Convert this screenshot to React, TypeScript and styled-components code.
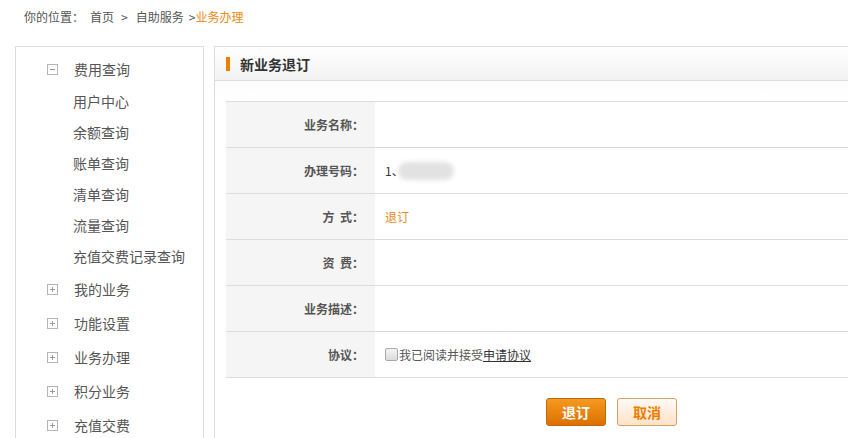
import * as React from 'react';
import styled, { createGlobalStyle } from 'styled-components';

const GlobalStyle = createGlobalStyle`
  html, body {
    margin: 0;
    padding: 0;
    background: #fff;
    overflow: hidden;
  }
  body {
    font-family: "Noto Sans CJK SC", "Liberation Sans", sans-serif;
    color: #555;
    font-size: 12px;
  }
`;

const Page = styled.div`
  width: 1100px;
  height: 438px;
  overflow: hidden;
`;

const Crumbs = styled.div`
  height: 34px;
  line-height: 34px;
  padding-left: 24px;
  font-size: 12px;
  color: #555;
  display: flex;
`;

const Here = styled.span`
  margin-right: 6px;
`;

const Sep = styled.span`
  margin: 0 ${p => (p.$tight ? '0' : '8px')} 0 ${p => (p.$tight ? '5px' : '7px')};
`;

const Current = styled.span`
  color: #f08a10;
`;

const Body = styled.div`
  display: flex;
  align-items: flex-start;
  gap: 10px;
  padding: 12px 0 0 15px;
`;

const Sidebar = styled.div`
  width: 187px;
  height: 420px;
  border: 1px solid #dcdcdc;
  padding-top: 5px;
  box-sizing: content-box;
`;

const MenuHead = styled.div`
  display: flex;
  align-items: center;
  height: 34px;
  padding-left: 31px;
  font-size: 14px;
  color: #555;
`;

const MenuSub = styled.div`
  height: 31px;
  line-height: 31px;
  padding-left: 57px;
  font-size: 14px;
  color: #555;
`;

const Toggle = styled.span`
  position: relative;
  width: 9px;
  height: 9px;
  border: 1px solid #b5b5b5;
  margin-right: 16px;
  flex: none;

  &::before {
    content: '';
    position: absolute;
    left: 2px;
    right: 2px;
    top: 4px;
    height: 1px;
    background: #999;
  }

  &::after {
    content: '';
    display: ${p => (p.$open ? 'none' : 'block')};
    position: absolute;
    top: 2px;
    bottom: 2px;
    left: 4px;
    width: 1px;
    background: #999;
  }
`;

const Panel = styled.div`
  width: 793px;
  height: 420px;
  border: 1px solid #dcdcdc;
`;

const PanelHead = styled.div`
  display: flex;
  align-items: center;
  height: 33px;
  padding-left: 11px;
  border-bottom: 1px solid #dcdcdc;
  background: linear-gradient(#ffffff, #f2f2f2);
`;

const Bar = styled.span`
  width: 4px;
  height: 14px;
  background: #f07c00;
  margin-right: 10px;
`;

const Title = styled.h2`
  margin: 0;
  font-size: 14px;
  font-weight: bold;
  color: #333;
`;

const Content = styled.div`
  padding: 20px 11px 0;
  background: linear-gradient(#fcfcfc, #fff 20px);
`;

const Table = styled.div`
  border-top: 1px solid #dcdcdc;
`;

const Row = styled.div`
  display: flex;
  height: 45px;
  border-bottom: 1px solid #dcdcdc;
`;

const Label = styled.div`
  width: 138px;
  padding-right: 11px;
  background: #f5f5f5;
  display: flex;
  align-items: center;
  justify-content: flex-end;
  font-weight: bold;
  color: #555;
  white-space: pre;
`;

const Value = styled.div`
  flex: 1;
  display: flex;
  align-items: center;
  padding-left: 10px;
  color: ${p => (p.$accent ? '#ea8a1c' : '#333')};
`;

const Blur = styled.span`
  display: inline-block;
  width: 56px;
  height: 18px;
  margin-left: -6px;
  background: #e2e2e2;
  border-radius: 9px;
  filter: blur(2px);
`;

const Check = styled.span`
  width: 11px;
  height: 11px;
  border: 1px solid #aaa;
  border-radius: 2px;
  background: linear-gradient(#f4f4f4, #dcdcdc);
  margin-right: 1px;
`;

const Agree = styled.span`
  color: #555;
`;

const Link = styled.a`
  color: #333;
  text-decoration: underline;
`;

const Actions = styled.div`
  display: flex;
  justify-content: center;
  gap: 11px;
  padding-top: 20px;
`;

const Button = styled.button`
  width: 60px;
  height: 28px;
  border-radius: 3px;
  font-family: inherit;
  font-size: 14px;
  font-weight: bold;
  cursor: pointer;
  padding: 0;
  border: 1px solid ${p => (p.$primary ? '#c46800' : '#d8a066')};
  color: ${p => (p.$primary ? '#fff' : '#f07c00')};
  background: ${p =>
    p.$primary
      ? 'linear-gradient(#f49a20, #dc7000)'
      : 'linear-gradient(#fffaf5, #fde3c8)'};
`;

const subs = ['用户中心', '余额查询', '账单查询', '清单查询', '流量查询', '充值交费记录查询'];
const groups = ['我的业务', '功能设置', '业务办理', '积分业务', '充值交费'];

export default function App() {
  return (
    <Page>
      <GlobalStyle />
      <Crumbs>
        <Here>你的位置：</Here>
        首页
        <Sep>&gt;</Sep>
        自助服务
        <Sep $tight>&gt;</Sep>
        <Current>业务办理</Current>
      </Crumbs>
      <Body>
        <Sidebar>
          <MenuHead>
            <Toggle $open />
            费用查询
          </MenuHead>
          {subs.map(s => (
            <MenuSub key={s}>{s}</MenuSub>
          ))}
          {groups.map(g => (
            <MenuHead key={g}>
              <Toggle />
              {g}
            </MenuHead>
          ))}
        </Sidebar>
        <Panel>
          <PanelHead>
            <Bar />
            <Title>新业务退订</Title>
          </PanelHead>
          <Content>
            <Table>
              <Row>
                <Label>业务名称：</Label>
                <Value />
              </Row>
              <Row>
                <Label>办理号码：</Label>
                <Value>
                  1、<Blur />
                </Value>
              </Row>
              <Row>
                <Label>方  式：</Label>
                <Value $accent>退订</Value>
              </Row>
              <Row>
                <Label>资  费：</Label>
                <Value />
              </Row>
              <Row>
                <Label>业务描述：</Label>
                <Value />
              </Row>
              <Row>
                <Label>协议：</Label>
                <Value>
                  <Check />
                  <Agree>我已阅读并接受</Agree>
                  <Link>申请协议</Link>
                </Value>
              </Row>
            </Table>
            <Actions>
              <Button $primary>退订</Button>
              <Button>取消</Button>
            </Actions>
          </Content>
        </Panel>
      </Body>
    </Page>
  );
}
